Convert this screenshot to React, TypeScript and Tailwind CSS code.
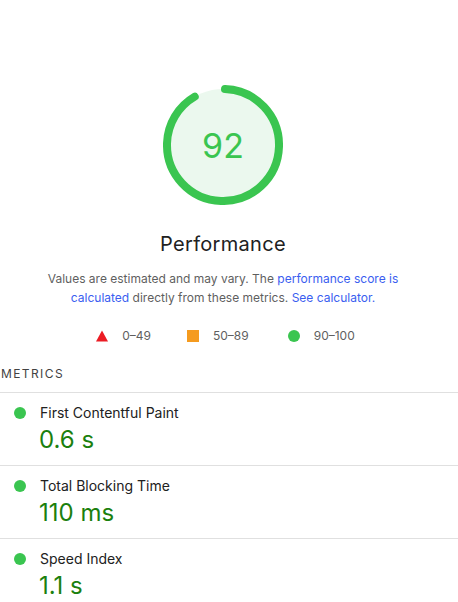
import React from "react";

const r = 56;
const C = 2 * Math.PI * r;
const sw = 8;
const score = 0.92;
const arcLen = score * C - sw / 2;
const rot = -90 + ((0.25 * sw) / C) * 360;

function Gauge() {
  return (
    <svg width="120" height="120" viewBox="0 0 120 120">
      <circle cx="60" cy="60" r="56" fill="#ebf8ee" stroke="none" />
      <circle
        cx="60"
        cy="60"
        r="56"
        fill="none"
        stroke="#3ac550"
        strokeWidth="8"
        strokeLinecap="round"
        strokeDasharray={`${arcLen} ${C}`}
        transform={`rotate(${rot} 60 60)`}
      />
      <text
        x="60"
        y="60"
        textAnchor="middle"
        dominantBaseline="central"
        fill="#3ac550"
        style={{ fontFamily: "Inter, 'Noto Sans', sans-serif", fontSize: "34px" }}
      >
        92
      </text>
    </svg>
  );
}

const metrics = [
  { label: "First Contentful Paint", value: "0.6 s" },
  { label: "Total Blocking Time", value: "110 ms" },
  { label: "Speed Index", value: "1.1 s" },
];

export default function App() {
  return (
    <div className="w-[458px] h-[602px] overflow-hidden bg-white font-['Inter','Noto_Sans',sans-serif] text-[#212121]">
      <div className="w-[446px] flex flex-col items-center pt-[85px]">
        <Gauge />
        <div className="mt-[25px] text-[20px] leading-[28px] tracking-[0.3px] text-[#212121]">Performance</div>
        <p className="mt-[11px] w-[360px] text-center text-[12px] leading-[19px] text-[#5f5f5f]">
          Values are estimated and may vary. The{" "}
          <a className="text-[#3a5ef0]">performance score is calculated</a> directly from these metrics.{" "}
          <a className="text-[#3a5ef0]">See calculator.</a>
        </p>
        <div className="mt-[19px] flex items-center text-[12px] leading-[20px] text-[#5f5f5f] pl-[5px]">
          <div className="flex items-center">
            <svg width="12" height="12" viewBox="0 0 12 12">
              <polygon points="6,0.5 12,11.5 0,11.5" fill="#eb1c24" />
            </svg>
            <span className="ml-[14px]">0–49</span>
          </div>
          <div className="flex items-center ml-[36px]">
            <div className="w-[12px] h-[12px] bg-[#f59b1f]" />
            <span className="ml-[14px]">50–89</span>
          </div>
          <div className="flex items-center ml-[39px]">
            <div className="w-[12px] h-[12px] rounded-full bg-[#3ac550]" />
            <span className="ml-[14px]">90–100</span>
          </div>
        </div>
      </div>
      <div className="mt-[20px]">
        <div className="text-[12px] leading-[16px] tracking-[1.4px] text-[#424242] pl-[1px] pb-[10px] border-b border-[#e0e0e0]">
          METRICS
        </div>
        {metrics.map((m) => (
          <div key={m.label} className="border-b border-[#e0e0e0] pt-[10px] pb-[11px]">
            <div className="flex items-center">
              <div className="ml-[14px] w-[12px] h-[12px] rounded-full bg-[#3ac550]" />
              <div className="ml-[14px] text-[14px] leading-[20px] text-[#212121]">{m.label}</div>
            </div>
            <div className="pl-[39px] mt-[3px] text-[24px] leading-[28px] text-[#1b800e]">{m.value}</div>
          </div>
        ))}
      </div>
    </div>
  );
}
